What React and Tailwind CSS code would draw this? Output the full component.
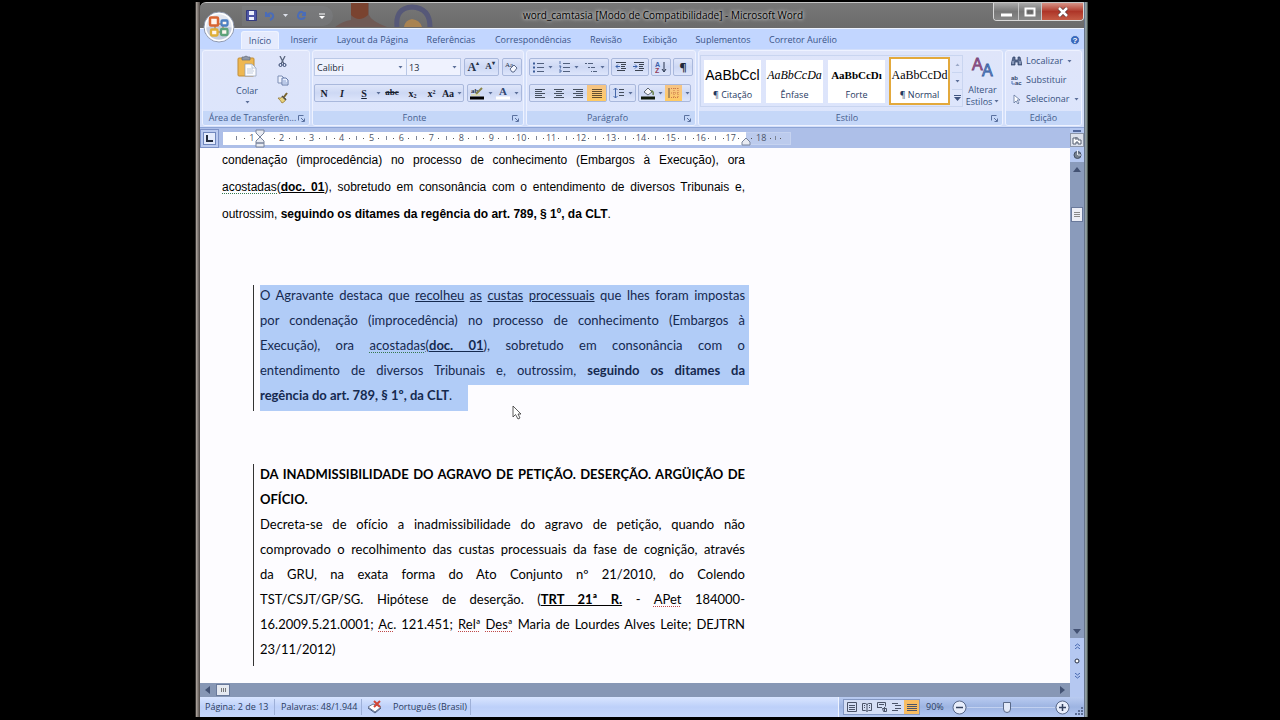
import React from 'react';

const tabs = [
  ['Início', 'w-[38px]'],
  ['Inserir', 'w-[50px]'],
  ['Layout da Página', 'w-[87px]'],
  ['Referências', 'w-[70px]'],
  ['Correspondências', 'w-[94px]'],
  ['Revisão', 'w-[52px]'],
  ['Exibição', 'w-[56px]'],
  ['Suplementos', 'w-[70px]'],
  ['Corretor Aurélio', 'w-[90px]'],
];

function Caret({ className = '' }) {
  return (
    <svg viewBox="0 0 5 3" className={`h-[3px] w-[5px] shrink-0 ${className}`} aria-hidden="true">
      <path d="M.5 0h4L2.500 2.500z" fill="#5b6e98" />
    </svg>
  );
}

function Svg({ w = 14, h = 14, children, className = '' }) {
  return (
    <svg width={w} height={h} viewBox={`0 0 ${w} ${h}`} className={`shrink-0 ${className}`} fill="none" aria-hidden="true">
      {children}
    </svg>
  );
}

function Tool({ label, children, className = '' }) {
  return (
    <button type="button" aria-label={label} className={`flex h-full items-center justify-center gap-[3px] ${className}`}>
      {children}
    </button>
  );
}

function Box({ children, className = '' }) {
  return (
    <div className={`flex h-[18px] items-center rounded-[2px] border border-[#a9b8dc] bg-linear-to-b from-[#dfe6fa] via-[#cdd8f4] to-[#dde5fb] ${className}`}>
      {children}
    </div>
  );
}

function Group({ title, launcher, children, className = '' }) {
  return (
    <section className={`flex h-[76px] flex-col overflow-hidden rounded-[3px] border border-[#eef2ff] bg-linear-to-b from-[#dfe5fa] to-[#dce5fc] ${className}`}>
      <div className="min-h-0 flex-1">{children}</div>
      <div className="flex h-[14px] items-center bg-[#c5d7f8] pr-1 pl-1 text-[#45608f]">
        <span className="flex-1 truncate text-center">{title}</span>
        {launcher && (
          <button type="button" aria-label={`Opções de ${title}`}>
            <Svg w={7} h={7}>
              <path d="M.5 5.500V.5h5M3 3l3 3M6.500 3.500v3h-3" stroke="#5a719f" />
            </Svg>
          </button>
        )}
      </div>
    </section>
  );
}

function Lines({ widths, x = () => 1, color = '#46505f' }) {
  return widths.map((w, i) => <path key={i} d={`M${x(w)} ${2.5 + i * 2}h${w}`} stroke={color} />);
}

function Clipboard() {
  return (
    <Group title="Área de Transferên..." launcher className="w-[108px]">
      <div className="flex h-full gap-3 pt-1 pl-[26px]">
        <button type="button" className="flex w-9 flex-col items-center">
          <Svg w={20} h={22}>
            <rect x="1" y="3" width="16" height="18" rx="1" fill="#eeb751" stroke="#c18d37" />
            <path d="M5 4V2h2q2-2 4 0h2v3H5z" fill="#9098a8" stroke="#666d7b" strokeWidth=".7" />
            <path d="M8 9h7l4 4v8H8z" fill="#fbfcff" stroke="#8d9bb5" strokeWidth=".7" />
            <path d="M15 9v4h4M10 14h6M10 16h7M10 18h6" stroke="#aab7d0" strokeWidth=".7" />
          </Svg>
          <span className="mt-2 leading-3 text-[#38527f]">Colar</span>
          <Caret className="mt-1" />
        </button>
        <div className="flex flex-col items-center gap-1">
          <Tool label="Recortar" className="max-h-[14px]">
            <Svg w={10} h={12}>
              <path d="M2 0l4 8M7 0L3 8" stroke="#59657d" strokeWidth="1.300" />
              <circle cx="2.500" cy="9" r="1.500" stroke="#34466e" />
              <circle cx="6.500" cy="9" r="1.500" stroke="#34466e" />
            </Svg>
          </Tool>
          <Tool label="Copiar" className="max-h-[14px]">
            <Svg w={12} h={11}>
              <path d="M1 1h4l2 2v5H1z" fill="#edf2ff" stroke="#7e8fb5" />
              <path d="M5 3h4l2 2v5H5z" fill="#e6edff" stroke="#657ba8" />
              <path d="M6 6h3M6 8h4" stroke="#8ea5d2" />
            </Svg>
          </Tool>
          <Tool label="Formatar pincel" className="max-h-[14px]">
            <Svg w={12} h={12}>
              <path d="M10 1L7 5" stroke="#7a652f" strokeWidth="2" />
              <path d="M1 6q3 1 5-2l3 3q-1 3-4 4-1-2-4-5z" fill="#e8d27d" stroke="#987b32" strokeWidth=".8" />
              <path d="M5 4l4 4" stroke="#4f4e4c" strokeWidth="1.500" />
            </Svg>
          </Tool>
        </div>
      </div>
    </Group>
  );
}

function FontGroup() {
  return (
    <Group title="Fonte" launcher className="w-[212px]">
      <div className="flex flex-col gap-2 px-px pt-[7px]">
        <div className="flex items-center gap-[3px]">
          <div className="flex">
            <div className="relative">
              <select aria-label="Fonte" className="h-[18px] w-[93px] appearance-none border border-[#bac8e6] bg-[#eff2fe] pl-[2px] leading-none text-[#222b3b]">
                <option>Calibri</option>
              </select>
              <Caret className="pointer-events-none absolute top-2 right-1" />
            </div>
            <div className="relative">
              <select aria-label="Tamanho da fonte" className="h-[18px] w-[54px] appearance-none border border-l-0 border-[#bac8e6] bg-[#eff2fe] pl-[2px] leading-none text-[#222b3b]">
                <option>13</option>
              </select>
              <Caret className="pointer-events-none absolute top-2 right-1" />
            </div>
          </div>
          <Box className="w-[36px] font-['Liberation_Serif',serif] font-bold text-[#27334a]">
            <Tool label="Aumentar fonte" className="flex-1 text-[12px]">A<span className="-ml-[3px] self-start text-[6px] leading-[8px]">▴</span></Tool>
            <Tool label="Reduzir fonte" className="flex-1 text-[9px]">A<span className="-ml-[3px] self-start text-[6px] leading-[8px]">▾</span></Tool>
          </Box>
          <Box className="w-[20px]">
            <Tool label="Limpar formatação" className="flex-1">
              <Svg w={14} h={14}>
                <text x="0" y="7" fontSize="7" fontFamily="Liberation Serif" fill="#27334a">Aa</text>
                <path d="M5 9l4-4 3 3-3 4H7z" fill="#f5f7ff" stroke="#5b6a8b" />
              </Svg>
            </Tool>
          </Box>
        </div>
        <div className="flex items-center gap-[3px]">
          <Box className="w-[150px] font-['Liberation_Serif',serif] text-[10px] text-[#17202f]">
            <Tool label="Negrito" className="w-[18px] font-black">N</Tool>
            <Tool label="Itálico" className="w-[18px] font-bold italic">I</Tool>
            <Tool label="Sublinhado" className="w-[30px] pl-1 font-bold"><span className="flex-1 underline">S</span><Caret /></Tool>
            <Tool label="Tachado" className="w-[22px] font-bold"><span className="text-[9px] line-through">abc</span></Tool>
            <Tool label="Subscrito" className="w-[19px]"><span className="font-bold">x<sub className="text-[6px]">2</sub></span></Tool>
            <Tool label="Sobrescrito" className="w-[19px]"><span className="font-bold">x<sup className="text-[6px]">2</sup></span></Tool>
            <Tool label="Maiúsculas e minúsculas" className="w-[22px] font-bold">Aa<Caret /></Tool>
          </Box>
          <Box className="flex-1">
            <Tool label="Cor do realce" className="flex-1">
              <Svg w={15} h={14}>
                <text x="1" y="7" fontSize="7" fontWeight="bold" fontFamily="Liberation Serif" fill="#27334a">ab</text>
                <path d="M6 8l6-6" stroke="#888447" strokeWidth="2" />
                <path d="M1 9h9" stroke="#e1db83" />
                <path d="M0 12h14" stroke="#000" strokeWidth="3" />
              </Svg>
              <Caret />
            </Tool>
            <Tool label="Cor da fonte" className="flex-1">
              <Svg w={15} h={14}>
                <text x="3" y="9" fontSize="11" fontWeight="bold" fontFamily="Liberation Serif" fill="#30466f">A</text>
                <path d="M0 12h14" stroke="#fff" strokeWidth="3" />
              </Svg>
              <Caret />
            </Tool>
          </Box>
        </div>
      </div>
    </Group>
  );
}

function ListIcon({ kind }) {
  return (
    <Svg w={12} h={12}>
      {kind === 'multi' ? (
        <path d="M0 2.500h2M3 2.500h5M3 6.500h2M6 6.500h4M6 10.500h1M8 10.500h4" stroke="#52617e" />
      ) : (
        <>
          <path d="M4 2.500h7M4 6.500h7M4 10.500h7" stroke="#52617e" />
          {kind === 'dots' ? (
            <path d="M0 2.500h2M0 6.500h2M0 10.500h2" stroke="#3c5d99" strokeWidth="2" />
          ) : (
            <path d="M1 0v3M0 5h2l-1 2h1M0 9h2v2H0" stroke="#3c5d99" strokeWidth=".8" />
          )}
        </>
      )}
    </Svg>
  );
}

function ParagraphGroup() {
  return (
    <Group title="Parágrafo" launcher className="w-[170px]">
      <div className="flex flex-col gap-2 px-[2px] pt-[7px]">
        <div className="flex gap-[2px]">
          <Box className="w-[80px]">
            <Tool label="Marcadores" className="flex-1"><ListIcon kind="dots" /><Caret /></Tool>
            <Tool label="Numeração" className="flex-1"><ListIcon kind="numbers" /><Caret /></Tool>
            <Tool label="Lista de vários níveis" className="flex-1"><ListIcon kind="multi" /><Caret /></Tool>
          </Box>
          <Box className="w-[38px]">
            <Tool label="Diminuir recuo" className="flex-1">
              <Svg w={12} h={12}><path d="M1 1.500h10M6 3.500h5M6 5.500h4M6 7.500h5M2 9.500h8" stroke="#3b4350" /><path d="M5 5.500H1M3 3.500l-2 2 2 2" stroke="#3a61aa" /></Svg>
            </Tool>
            <Tool label="Aumentar recuo" className="flex-1">
              <Svg w={12} h={12}><path d="M1 1.500h10M6 3.500h5M6 5.500h4M6 7.500h5M2 9.500h8" stroke="#3b4350" /><path d="M0 5.500h4M2 3.500l2 2-2 2" stroke="#3a61aa" /></Svg>
            </Tool>
          </Box>
          <Box className="w-[20px]">
            <Tool label="Classificar" className="flex-1">
              <Svg w={12} h={14}>
                <text x="0" y="7" fontSize="7" fontFamily="Liberation Sans" fontWeight="bold" fill="#3d5eab">A</text>
                <text x="0" y="13" fontSize="7" fontFamily="Liberation Sans" fontWeight="bold" fill="#923d5a">Z</text>
                <path d="M9 2v9M7 9l2 3 2-3" stroke="#26334c" />
              </Svg>
            </Tool>
          </Box>
          <Box className="w-[20px] text-[11px] font-bold text-[#1e2838]"><Tool label="Mostrar tudo" className="flex-1">¶</Tool></Box>
        </div>
        <div className="flex gap-[2px]">
          <Box className="w-[78px]">
            <Tool label="Alinhar à esquerda" className="flex-1"><Svg w={12} h={12}><Lines widths={[10, 7, 10, 7, 10]} /></Svg></Tool>
            <Tool label="Centralizar" className="flex-1"><Svg w={12} h={12}><Lines widths={[10, 6, 10, 6, 10]} x={(w) => (12 - w) / 2} /></Svg></Tool>
            <Tool label="Alinhar à direita" className="flex-1"><Svg w={12} h={12}><Lines widths={[10, 7, 10, 7, 10]} x={(w) => 11 - w} /></Svg></Tool>
            <Tool label="Justificar" className="flex-1 bg-linear-to-b from-[#f5c486] to-[#ffca62]"><Svg w={12} h={12}><Lines widths={[10, 10, 10, 10, 10]} color="#66502f" /></Svg></Tool>
          </Box>
          <Box className="w-[27px]">
            <Tool label="Espaçamento entre linhas" className="flex-1">
              <Svg w={12} h={12}><path d="M2.500 1v10M.5 3l2-2 2 2M.5 9l2 2 2-2" stroke="#4769aa" /><path d="M6 2.500h5M6 5.500h5M6 8.500h5" stroke="#454e5c" /></Svg>
              <Caret />
            </Tool>
          </Box>
          <Box className="w-[53px]">
            <Tool label="Sombreamento" className="flex-1">
              <Svg w={14} h={14}>
                <path d="M3 6l4-4 4 4-4 3z" fill="#f7f7fa" stroke="#5b6470" />
                <path d="M10 5q3 0 2 4" stroke="#667e45" strokeWidth="1.500" />
                <path d="M0 12h14" stroke="#111b0c" strokeWidth="3" />
              </Svg>
              <Caret />
            </Tool>
            <Tool label="Bordas" className="flex-1">
              <span className="flex h-full w-[17px] items-center justify-center bg-linear-to-b from-[#f5c486] to-[#ffca62]">
                <Svg w={11} h={12}><path d="M1 1v10" stroke="#695544" /><path d="M3 1.500h7M3 6h7M3 10.500h7M6 1v10M10 1v10" stroke="#cc7a4b" strokeDasharray="1 1" /></Svg>
              </span>
              <Caret />
            </Tool>
          </Box>
        </div>
      </div>
    </Group>
  );
}

const styleCards = [
  ['AaBbCcl', '¶ Citação', "font-['Liberation_Sans',sans-serif] text-[14px]"],
  ['AaBbCcDa', 'Ênfase', "font-['Liberation_Serif',serif] text-[12px] italic"],
  ['AaBbCcDı', 'Forte', "font-['Liberation_Serif',serif] text-[11px] font-bold"],
  ['AaBbCcDd', '¶ Normal', "font-['Liberation_Serif',serif] text-[12px]"],
];

function StyleGroup() {
  return (
    <Group title="Estilo" launcher className="min-w-0 flex-1">
      <div className="flex h-full items-center">
        <div className="ml-px flex h-[52px] items-center border border-[#c9d5f0] pl-[2px]">
          {styleCards.map(([sample, name, face], i) => (
            <button
              key={name}
              type="button"
              className={`flex flex-col items-center justify-center overflow-hidden bg-white text-[#26395f] ${
                i === 3 ? 'h-[48px] w-[61px] border-2 border-[#e3a93c]' : 'mr-[4px] ml-px h-[43px] w-[57px]'
              }`}
            >
              <span className={`flex h-[28px] items-center whitespace-nowrap text-black ${face}`}>{sample}</span>
              <span className="leading-3 whitespace-nowrap">{name}</span>
            </button>
          ))}
          <div className="flex h-full w-[12px] flex-col divide-y divide-[#c9d5f0] pl-[2px]">
            <button type="button" aria-label="Linha anterior" className="flex flex-1 items-center justify-center"><Caret className="rotate-180 opacity-50" /></button>
            <button type="button" aria-label="Próxima linha" className="flex flex-1 items-center justify-center"><Caret /></button>
            <button type="button" aria-label="Mais estilos" className="flex flex-1 items-center justify-center">
              <Svg w={7} h={6}><path d="M0 .5h7" stroke="#3f5480" /><path d="M0 2h7L3.500 6z" fill="#3f5480" /></Svg>
            </button>
          </div>
        </div>
        <button type="button" className="flex flex-1 flex-col items-center pt-px leading-3 text-[#38527f]">
          <Svg w={24} h={24} className="overflow-visible">
            <text x="1" y="14" fontSize="16" fontFamily="Liberation Sans" fill="#ba5b9c" stroke="#774778" strokeWidth=".8">A</text>
            <text x="11" y="20" fontSize="16" fontFamily="Liberation Sans" fill="#7fa5e5" stroke="#395fa0" strokeWidth=".8">A</text>
          </Svg>
          <span className="mt-1">Alterar</span>
          <span className="flex items-center gap-[2px] whitespace-nowrap">Estilos <Caret /></span>
        </button>
      </div>
    </Group>
  );
}

function EditGroup() {
  return (
    <Group title="Edição" className="w-[77px]">
      <div className="flex h-full flex-col gap-px pt-px pl-[5px] text-[#38527f]">
        <button type="button" className="flex h-[18px] items-center gap-1">
          <Svg w={11} h={11}>
            <path d="M2 1h2v3h3V1h2l2 8H7V6H4v3H0z" fill="#5b6c91" stroke="#2f4269" strokeWidth=".7" />
            <path d="M2 5v3M9 5v3" stroke="#b4c2df" />
          </Svg>
          Localizar <Caret />
        </button>
        <button type="button" className="flex h-[18px] items-center gap-1">
          <Svg w={11} h={11}>
            <text x="0" y="5" fontSize="6" fontWeight="bold" fontFamily="Liberation Sans" fill="#34466e">ab</text>
            <text x="4" y="10" fontSize="6" fontWeight="bold" fontFamily="Liberation Sans" fill="#34466e">ac</text>
            <path d="M1 6v3h3" stroke="#5278bd" />
          </Svg>
          Substituir
        </button>
        <button type="button" className="flex h-[18px] items-center gap-1 whitespace-nowrap">
          <Svg w={11} h={11}><path d="M3 1v8l2-2 2 3 1-1-2-3h3z" fill="#fff" stroke="#60759c" strokeWidth=".8" /></Svg>
          Selecionar <Caret />
        </button>
      </div>
    </Group>
  );
}

function TitleBar() {
  return (
    <header className="relative flex h-[26px] shrink-0 items-center overflow-hidden rounded-tl-md border-t border-[#c5c5c5] bg-linear-to-b from-[#777] to-[#6b6b6b]">
      <svg viewBox="0 0 100 24" className="absolute top-0 left-[135px] h-6 w-[100px]" aria-hidden="true">
        <path d="M0 24q8-6 16-7V0h18v12q2 6 18 12z" fill="#6f5a55" />
        <path d="M16 0h17v12q-9 8-17 0z" fill="#7a4330" />
        <path d="M62 24q-2-19 15-20 18 1 18 20" fill="none" stroke="#565878" strokeWidth="5" />
        <path d="M69 24q1-7 8-8 8 1 10 8z" fill="#a98351" />
      </svg>
      <div className="relative flex flex-1 pl-[42px]">
        <div className="flex h-5 items-center gap-2 rounded-r-full bg-[#8588904d] pr-2 pl-1">
          <button type="button" aria-label="Salvar">
            <Svg w={11} h={11}><path d="M.5.500h10v10H.5z" fill="#4d55a5" stroke="#343b80" /><path d="M3 1h5v4H3zM3 7h5v3H3z" fill="#eceffc" /></Svg>
          </button>
          <button type="button" aria-label="Desfazer" className="flex items-center gap-2">
            <Svg w={10} h={10}><path d="M1 1v4h4M1 5q5-5 7-1 1 3-3 5" stroke="#4a6cb8" strokeWidth="2" /></Svg>
            <svg viewBox="0 0 5 3" className="h-[3px] w-[5px]" aria-hidden="true"><path d="M0 0h5L2.500 3z" fill="#dce0e9" /></svg>
          </button>
          <button type="button" aria-label="Repetir">
            <Svg w={11} h={11}><path d="M9 2v3H6M9 5Q6 0 3 3q-3 5 2 6 3 0 4-2" stroke="#4a6cb8" strokeWidth="2" /></Svg>
          </button>
          <button type="button" aria-label="Personalizar barra" className="ml-1">
            <Svg w={6} h={6}><path d="M0 1h6" stroke="#fff" /><path d="M0 3h6L3 6z" fill="#fff" /></Svg>
          </button>
        </div>
      </div>
      <h1 className="relative text-[10px] whitespace-nowrap text-black [text-shadow:0_0_4px_#ddd,0_0_3px_#ccc]">
        word_camtasia [Modo de Compatibilidade] - Microsoft Word
      </h1>
      <div className="relative flex flex-1 justify-end self-start text-white">
        <div className="flex h-[18px] overflow-hidden rounded-b border border-t-0 border-[#d8d8d8]">
          <button type="button" aria-label="Minimizar" className="flex w-[25px] items-center justify-center border-r border-[#c5c5c5] bg-linear-to-b from-[#aaa] via-[#777] to-[#888]">
            <Svg w={11} h={10}><path d="M0 8h11" stroke="#fff" strokeWidth="3" /></Svg>
          </button>
          <button type="button" aria-label="Restaurar" className="flex w-[23px] items-center justify-center border-r border-[#c5c5c5] bg-linear-to-b from-[#aaa] via-[#777] to-[#888]">
            <Svg w={12} h={10}><path d="M1.500 1.500h9v7h-9z" stroke="#fff" strokeWidth="2" /><path d="M4 4h4v2H4z" stroke="#444" strokeWidth=".5" /></Svg>
          </button>
          <button type="button" aria-label="Fechar" className="flex w-[41px] items-center justify-center bg-linear-to-b from-[#d59286] via-[#ae3528] to-[#c45b45]">
            <Svg w={12} h={10}><path d="M2 1l8 8M10 1L2 9" stroke="#5d3c3c" strokeWidth="4" /><path d="M2 1l8 8M10 1L2 9" stroke="#fff" strokeWidth="2.500" /></Svg>
          </button>
        </div>
      </div>
    </header>
  );
}

function Orb() {
  return (
    <button type="button" aria-label="Botão Office" className="absolute top-[9px] left-[3px] z-10 h-8 w-8 rounded-full">
      <svg viewBox="0 0 32 32" className="h-8 w-8" aria-hidden="true">
        <circle cx="16" cy="16" r="15" fill="#e3e7f1" stroke="#8d97ad" strokeWidth="1" />
        <path d="M2 17q14-5 28 0-1 13-14 13T2 17z" fill="#c6cee0" />
        <circle cx="16" cy="16" r="13.500" fill="none" stroke="#fff" strokeWidth="1.500" />
        <path d="M12 18v-5h8v6M13 21h6" fill="none" stroke="#b98d59" strokeWidth="1.500" />
        <g fill="#fff6ef">
          <rect x="7" y="6.500" width="8" height="8" rx="1" stroke="#d96532" strokeWidth="2.500" />
          <rect x="18.500" y="9.500" width="6" height="5" rx="1" stroke="#4c7fc2" strokeWidth="2.300" />
          <rect x="8" y="18.500" width="6.500" height="6" rx="1" stroke="#dfb038" strokeWidth="2.300" />
          <rect x="18" y="18" width="6.500" height="6" rx="1" stroke="#5da27a" strokeWidth="2.300" />
        </g>
      </svg>
    </button>
  );
}

function RulerCell({ n, mark = true }) {
  return (
    <div className="grid min-w-0 flex-1 grid-cols-4 items-center justify-items-center">
      <i className={`h-1 w-px ${mark ? 'bg-[#7d8596]' : ''}`} />
      <i className="h-px w-px bg-[#555]" />
      <span className="text-[9px] leading-3">{n}</span>
      <i className="h-px w-px bg-[#555]" />
    </div>
  );
}

function Ruler() {
  return (
    <div className="flex h-[20px] shrink-0 items-center bg-[#adbfe8] text-[#4a5468]">
      <button type="button" aria-label="Tipo de tabulação" className="mr-[4px] flex h-[19px] w-[19px] items-center justify-center border border-[#7e93c8] bg-[#b9c9ef]">
        <span className="flex h-[13px] w-[13px] items-center justify-center border border-[#7087bd] bg-[#e4ebfc]">
          <Svg w={7} h={7}><path d="M1 0v6h6" stroke="#222b3d" strokeWidth="2" /></Svg>
        </span>
      </button>
      <div className="relative flex h-[13px] w-[523px] bg-white pr-1 pl-[10px]">
        {Array.from({ length: 17 }, (_, i) => <RulerCell key={i} n={i + 1} mark={i !== 1} />)}
        <svg viewBox="0 0 10 19" className="absolute -top-[3px] left-[32px] h-[19px] w-[10px]" aria-hidden="true">
          <path d="M1 1h8v3L5 8 1 4zM5 8l4 4v2H1v-2zM1 14h8v4H1z" fill="#e8ebf2" stroke="#78849c" />
        </svg>
        <svg viewBox="0 0 10 9" className="absolute top-[5px] -right-[5px] h-[9px] w-[10px]" aria-hidden="true">
          <path d="M5 1l4 4v3H1V5z" fill="#e8ebf2" stroke="#78849c" />
        </svg>
      </div>
      <div className="flex h-[13px] w-[45px] items-center gap-[4px] border border-l-0 border-[#c6d3f0] bg-[#bccbed] pl-[5px] text-[9px] leading-3">
        <i className="h-px w-px bg-[#555]" />18<i className="h-px w-px bg-[#555]" /><i className="h-1 w-px bg-[#7d8596]" /><i className="h-px w-px bg-[#555]" />
      </div>
    </div>
  );
}

function J({ children, className = '' }) {
  return <span className={`block whitespace-nowrap [text-align-last:justify] ${className}`}>{children}</span>;
}

const spell = 'underline decoration-[#c04848] decoration-dotted decoration-1 underline-offset-2';
const grammar = 'underline decoration-[#35784e] decoration-dotted decoration-1 underline-offset-2';
const quote = "font-[Lato,sans-serif] text-[13px] leading-[20px] [font-variant-ligatures:none]";

function Document() {
  return (
    <main className="min-h-0 flex-1 overflow-hidden bg-[#fdfcff] pl-[22px] text-black">
      <div className="w-[523px]">
        <p className="-mt-px font-['Liberation_Sans',Arial,sans-serif] text-[12px] leading-[27px]">
          <J>condenação (improcedência) no processo de conhecimento (Embargos à Execução), ora</J>
          <J><span className={grammar}>acostadas(</span><b className="underline">doc. 01</b>), sobretudo em consonância com o entendimento de diversos Tribunais e,</J>
          <span className="block whitespace-nowrap">outrossim, <b>seguindo os ditames da regência do art. 789, § 1º, da CLT</b>.</span>
        </p>
        <p className={`mt-[57px] -mr-1 ml-[31px] border-l border-[#333] pl-[6px] text-[#15294f] ${quote}`}>
          <J className="bg-[#b1ccf7] pr-1 pb-[5px]">O Agravante destaca que <u>recolheu</u> <u>as</u> <u>custas</u> <u>processuais</u> que lhes foram impostas</J>
          <J className="bg-[#b1ccf7] pr-1 pb-[5px]">por condenação (improcedência) no processo de conhecimento (Embargos à</J>
          <J className="bg-[#b1ccf7] pr-1 pb-[5px]">Execução), ora <span className={grammar}>acostadas</span><u>(<b>doc. 01</b></u>), sobretudo em consonância com o</J>
          <J className="bg-[#b1ccf7] pr-1 pb-[5px]">entendimento de diversos Tribunais e, outrossim, <b>seguindo os ditames da</b></J>
          <span className="block w-fit bg-[#b1ccf7] pr-4 pb-[6px] whitespace-nowrap"><b>regência do art. 789, § 1º, da CLT</b>.</span>
        </p>
        <div className={`mt-[53px] ml-[31px] border-l border-[#333] pb-[2px] pl-[6px] ${quote}`}>
          <h2 className="font-bold">
            <J className="pb-[5px]">DA INADMISSIBILIDADE DO AGRAVO DE PETIÇÃO. DESERÇÃO. ARGÜIÇÃO DE</J>
            <span className="block pb-[5px]">OFÍCIO.</span>
          </h2>
          <p>
            <J className="pb-[5px]">Decreta-se de ofício a inadmissibilidade do agravo de petição, quando não</J>
            <J className="pb-[5px]">comprovado o recolhimento das custas processuais da fase de cognição, através</J>
            <J className="pb-[5px]">da GRU, na exata forma do Ato Conjunto nº 21/2010, do Colendo</J>
            <J className="pb-[5px]">TST/CSJT/GP/SG. Hipótese de deserção. (<b className="underline">TRT 21ª R.</b> - <span className={spell}>APet</span> 184000-</J>
            <J className="pb-[5px]">16.2009.5.21.0001; <span className={spell}>Ac</span>. 121.451; <span className={spell}>Relª</span> <span className={spell}>Desª</span> Maria de Lourdes Alves Leite; DEJTRN</J>
            <span className="block pb-[5px]">23/11/2012)</span>
          </p>
        </div>
      </div>
    </main>
  );
}

function HScroll() {
  return (
    <div className="flex h-[14px] shrink-0 items-center justify-between bg-[#8797b5] px-[5px]">
      <div className="flex items-center gap-[6px]">
        <button type="button" aria-label="Rolar para a esquerda"><Svg w={5} h={8}><path d="M5 0v8L0 4z" fill="#435273" /></Svg></button>
        <div className="flex h-3 w-[14px] items-center justify-center gap-px border border-[#69799b] bg-[#e5e9f1]">
          <i className="h-1 w-px bg-[#777]" /><i className="h-1 w-px bg-[#777]" /><i className="h-1 w-px bg-[#777]" />
        </div>
      </div>
      <button type="button" aria-label="Rolar para a direita"><Svg w={5} h={8}><path d="M0 0v8l5-4z" fill="#435273" /></Svg></button>
    </div>
  );
}

function VScroll() {
  return (
    <aside className="flex w-[14px] shrink-0 flex-col items-center bg-[#b5c8f1]">
      <div className="mt-[2px] h-[2px] w-2 bg-[#53699c]" />
      <button type="button" aria-label="Exibir régua" className="mt-px flex h-[14px] w-full items-center justify-center border border-[#8b95a8] bg-[#dce1eb]">
        <Svg w={10} h={9}><path d="M1 2h5v2h3v4H6V6H4v2H1zM4 1v3" fill="#fff" stroke="#555e70" /></Svg>
      </button>
      <div className="flex h-[15px] items-center">
        <Svg w={9} h={9}><circle cx="4.500" cy="5" r="3.500" fill="#75808f" stroke="#424e63" /><path d="M4.500 0v5M5 5h3" stroke="#e5e9f1" /></Svg>
      </div>
      <div className="flex w-full flex-1 flex-col items-center bg-[#8a9bbb] pt-[5px] pb-1">
        <button type="button" aria-label="Rolar para cima"><Svg w={8} h={5} className="block"><path d="M0 5h8L4 0z" fill="#435273" /></Svg></button>
        <div className="mt-[35px] flex h-[15px] w-3 flex-col items-center justify-center gap-px border border-[#69799b] bg-[#eceef6]">
          <i className="h-px w-[6px] bg-[#888]" /><i className="h-px w-[6px] bg-[#888]" /><i className="h-px w-[6px] bg-[#888]" />
        </div>
        <button type="button" aria-label="Rolar para baixo" className="mt-auto"><Svg w={8} h={5} className="block"><path d="M0 0h8L4 5z" fill="#435273" /></Svg></button>
      </div>
      <div className="flex h-[59px] flex-col items-center gap-[9px] pt-[5px]">
        <button type="button" aria-label="Página anterior"><Svg w={5} h={6} className="block"><path d="M0 3l2.500-2L5 3M0 6l2.500-2L5 6" stroke="#4567ae" /></Svg></button>
        <button type="button" aria-label="Selecionar objeto"><Svg w={6} h={6} className="block"><circle cx="3" cy="3" r="2" fill="#fff" stroke="#222c41" /></Svg></button>
        <button type="button" aria-label="Próxima página"><Svg w={5} h={6} className="block"><path d="M0 0l2.500 2L5 0M0 3l2.500 2L5 3" stroke="#4567ae" /></Svg></button>
      </div>
    </aside>
  );
}

function StatusBar() {
  const views = [
    ['Layout de impressão', 'M1.500 1.500h9v9h-9zM3 4.500h6M3 6.500h6M3 8.500h6'],
    ['Leitura em tela inteira', 'M1.500 2.500h3l1.500 1 1.500-1h3v7h-3l-1.500 1-1.500-1h-3zM6 3v7M3 4.500h1M8 4.500h1M3 6.500h1M8 6.500h1'],
    ['Layout da Web', 'M1.500 6.500v-5h8v4M1 6.500h5M3 3.500h5M6.500 7.500h4v3h-3zM8.500 6v4'],
    ['Estrutura de tópicos', 'M1 2.500h6M4 4.500h6M4 7.500h6M1 9.500h6'],
    ['Rascunho', 'M1 3.500h10M1 5.500h10M1 7.500h10M1 9.500h10'],
  ];
  return (
    <footer className="flex h-[20px] shrink-0 items-center bg-linear-to-b from-[#d9e5ff] via-[#bdd0f9] to-[#c7d7fc] text-[#2b3c60]">
      <button type="button" className="h-4 w-[75px] border-r border-[#9eb0d8] pl-[5px] text-left whitespace-nowrap">Página: 2 de 13</button>
      <button type="button" className="h-4 w-[87px] border-r border-[#9eb0d8] pl-[6px] text-left whitespace-nowrap">Palavras: 48/1.944</button>
      <button type="button" aria-label="Revisão de texto" className="flex w-[31px] items-center pl-[5px]">
        <Svg w={15} h={14}>
          <path d="M1 7l5-3 8 3-6 5z" fill="#fff" stroke="#6c7790" />
          <path d="M1 8l7 5 6-5" stroke="#4e5d80" />
          <path d="M7 1l6 6M13 1L7 7" stroke="#d24636" strokeWidth="2" />
        </Svg>
      </button>
      <button type="button" className="h-4 w-[78px] border-r border-[#9eb0d8] text-left whitespace-nowrap">Português (Brasil)</button>
      <div className="ml-auto flex h-full items-center border-l border-[#eef3ff] bg-linear-to-b from-[#b9cbf1] via-[#9db4e2] to-[#b5c9f1] pl-1">
        <div className="flex h-4 border border-[#8297c3] bg-[#d5dff5]">
          {views.map(([label, d], i) => (
            <button key={label} type="button" aria-label={label} className={`flex w-[15px] items-center justify-center ${i === 4 ? 'bg-[#f7bd62]' : ''}`}>
              <Svg w={12} h={12}><path d={d} stroke="#4b5468" /></Svg>
            </button>
          ))}
        </div>
        <span className="ml-[6px] w-[26px]">90%</span>
        <button type="button" aria-label="Diminuir zoom"><Svg w={15} h={15} className="block"><circle cx="7.500" cy="7.500" r="6.500" fill="#e7edfb" stroke="#596989" /><path d="M4 7.500h7" stroke="#34425f" strokeWidth="1.500" /></Svg></button>
        <input
          type="range"
          aria-label="Zoom"
          min="0"
          max="100"
          defaultValue="45"
          className="h-4 w-[88px] appearance-none bg-linear-to-b from-transparent from-[47%] via-[#e9efff] via-50% to-transparent to-[56%] [&::-webkit-slider-thumb]:h-[11px] [&::-webkit-slider-thumb]:w-[8px] [&::-webkit-slider-thumb]:appearance-none [&::-webkit-slider-thumb]:rounded-b-full [&::-webkit-slider-thumb]:border [&::-webkit-slider-thumb]:border-[#596989] [&::-webkit-slider-thumb]:bg-[#e2e9f8]"
        />
        <button type="button" aria-label="Aumentar zoom"><Svg w={15} h={15} className="block"><circle cx="7.500" cy="7.500" r="6.500" fill="#e7edfb" stroke="#596989" /><path d="M4 7.500h7M7.500 4v7" stroke="#34425f" strokeWidth="1.500" /></Svg></button>
        <Svg w={12} h={12} className="ml-[2px] self-end"><path d="M9 3h2M6 6h2M9 6h2M3 9h2M6 9h2M9 9h2" stroke="#5c6e94" strokeWidth="2" /></Svg>
      </div>
    </footer>
  );
}

export default function App() {
  return (
    <div className="flex min-h-screen bg-black px-[15%] font-['Open_Sans','Noto_Sans',sans-serif] text-[9px]">
      <div className="relative flex min-w-0 flex-1 pt-[2px] pb-[3px]">
        <div className="w-2 shrink-0 bg-linear-to-r from-black from-35% via-[#a8a09a] via-55% to-[#4b4542]" />
        <div className="relative flex min-w-0 flex-1 flex-col">
          <TitleBar />
          <Orb />
          <nav className="flex h-[21px] shrink-0 items-end border-t border-[#edf3ff] bg-[#c2d6ff] pl-[41px] text-[#3a5488]">
            {tabs.map(([name, w], i) => (
              <button
                key={name}
                type="button"
                className={`h-[18px] shrink-0 whitespace-nowrap ${w} ${i === 0 ? 'rounded-t-[3px] border border-b-0 border-[#eff4ff] bg-[#e5ebfd]' : ''}`}
              >
                {name}
              </button>
            ))}
            <button type="button" aria-label="Ajuda" className="mr-1 mb-1 ml-auto">
              <svg viewBox="0 0 10 10" className="block h-[10px] w-[10px]" aria-hidden="true">
                <circle cx="5" cy="5" r="4.500" fill="#3869bd" stroke="#dfe9ff" strokeWidth=".7" />
                <text x="5" y="8" textAnchor="middle" fontSize="8" fontWeight="bold" fontFamily="Liberation Sans" fill="#fff">?</text>
              </svg>
            </button>
          </nav>
          <div className="flex shrink-0 gap-[2px] border-b border-[#8ea5d6] bg-[#d3dffa] px-[2px] pt-[1px] pb-[1px]">
            <Clipboard />
            <FontGroup />
            <ParagraphGroup />
            <StyleGroup />
            <EditGroup />
          </div>
          <div className="flex min-h-0 flex-1">
            <div className="flex min-w-0 flex-1 flex-col">
              <Ruler />
              <Document />
              <HScroll />
            </div>
            <VScroll />
          </div>
          <StatusBar />
        </div>
        <div className="w-1 shrink-0 bg-linear-to-r from-[#52607c] via-[#a7b4b2] to-[#303a37]" />
        <svg viewBox="0 0 10 16" className="absolute top-[405px] left-[320px] h-4 w-[10px]" aria-hidden="true">
          <path d="M1 1v11l2.500-2.500L6 14l2-1-2-4h3z" fill="#fff" stroke="#333" strokeWidth=".8" />
        </svg>
      </div>
    </div>
  );
}
